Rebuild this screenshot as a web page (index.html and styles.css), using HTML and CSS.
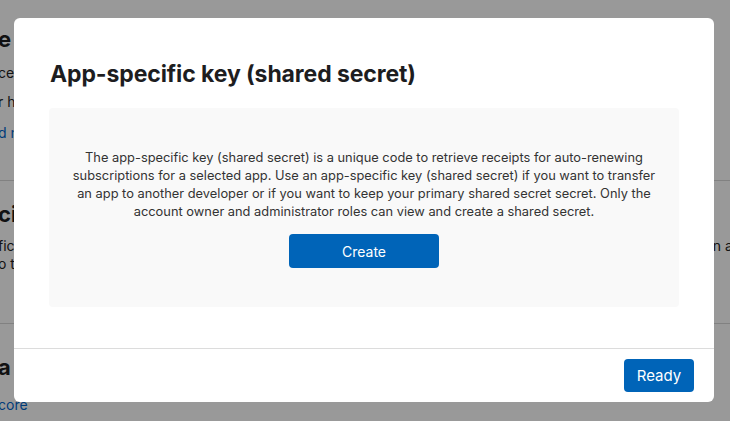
FILE: index.html
```html
<!DOCTYPE html>
<html lang="en">
<head>
<meta charset="utf-8">
<title>App-specific key</title>
<link rel="stylesheet" href="styles.css">
</head>
<body>
<div class="page">
  <section class="bg-section first">
    <h2 class="bg-heading">e receipts</h2>
    <p class="bg-text">ces for your subscriptions</p>
    <p class="bg-text">r history</p>
    <a class="bg-link" href="#">d more</a>
  </section>
  <section class="bg-section second">
    <h2 class="bg-heading">cific Shared Secret</h2>
    <div class="bg-row">
      <p class="bg-text">fic key to retrieve receipts</p>
      <p class="bg-text bg-right">n app</p>
    </div>
    <p class="bg-text">o the app</p>
  </section>
  <section class="bg-section third">
    <h2 class="bg-heading">a</h2>
    <a class="bg-link" href="#">core</a>
  </section>
</div>

<div class="overlay">
  <div class="modal" role="dialog" aria-labelledby="modal-title">
    <div class="modal-main">
      <h1 class="modal-title" id="modal-title">App-specific key (shared secret)</h1>
      <div class="info-box">
        <p class="info-text">The app-specific key (shared secret) is a unique code to retrieve receipts for auto-renewing subscriptions for a selected app. Use an app-specific key (shared secret) if you want to transfer an app to another developer or if you want to keep your primary shared secret secret. Only the account owner and administrator roles can view and create a shared secret.</p>
        <button class="btn btn-create" type="button">Create</button>
      </div>
    </div>
    <div class="modal-footer">
      <button class="btn btn-ready" type="button">Ready</button>
    </div>
  </div>
</div>
</body>
</html>
```
FILE: styles.css
```css
* { box-sizing: border-box; }
html, body { margin: 0; padding: 0; }
body {
  width: 730px;
  height: 421px;
  overflow: hidden;
  background: #fff;
  font-family: Inter, "Liberation Sans", sans-serif;
  color: #1d1d1f;
}
.page {
  margin-left: -2px;
}
.bg-section {
  border-bottom: 1px solid #d8d8d8;
}
.bg-section.first { padding: 26px 0 40px; height: 181px; }
.bg-section.second { padding: 20px 0 0; height: 143px; }
.bg-section.third { padding: 30px 0 0; border-bottom: 0; }
.bg-heading {
  margin: 0 0 12px;
  font-size: 22px;
  font-weight: 700;
  line-height: 26px;
}
.bg-text {
  margin: 0 0 11px;
  font-size: 14px;
  line-height: 18px;
  color: #222;
}
.second .bg-text { margin: 0; }
.second .bg-row { margin-top: -2px; }
.bg-row {
  display: flex;
  justify-content: space-between;
  margin-right: -20px;
}
.bg-link {
  font-size: 14px;
  line-height: 18px;
  color: #0066cc;
  text-decoration: none;
}
.third .bg-heading { margin-bottom: 14px; }

.overlay {
  position: fixed;
  inset: 0;
  background: rgba(0, 0, 0, 0.4);
  padding: 18px 16px 19px 14px;
}
.modal {
  width: 700px;
  height: 384px;
  background: #fff;
  border-radius: 6px;
  display: flex;
  flex-direction: column;
}
.modal-main {
  flex: 1;
  padding: 42px 35px 0 35px;
}
.modal-title {
  margin: 0 0 20px 1px;
  font-size: 23px;
  font-weight: 700;
  line-height: 28px;
  letter-spacing: -0.1px;
  color: #1d1d1f;
}
.info-box {
  background: #f9f9f9;
  border-radius: 4px;
  height: 199px;
  padding: 41px 16px 0;
  display: flex;
  flex-direction: column;
  align-items: center;
}
.info-text {
  margin: 0;
  font-size: 12.85px;
  line-height: 18px;
  color: #333;
  text-align: center;
}
.btn {
  border: 0;
  border-radius: 4px;
  background: #0064b8;
  color: #fff;
  font-family: Inter, "Liberation Sans", sans-serif;
  font-size: 14px;
  cursor: pointer;
}
.btn-create {
  margin-top: 13px;
  width: 150px;
  height: 34px;
}
.modal-footer {
  border-top: 1px solid #dcdcdc;
  height: 54px;
  padding: 10px 20px 0 0;
  display: flex;
  justify-content: flex-end;
  align-items: flex-start;
}
.btn-ready {
  width: 70px;
  height: 33px;
  font-size: 15px;
}
```
